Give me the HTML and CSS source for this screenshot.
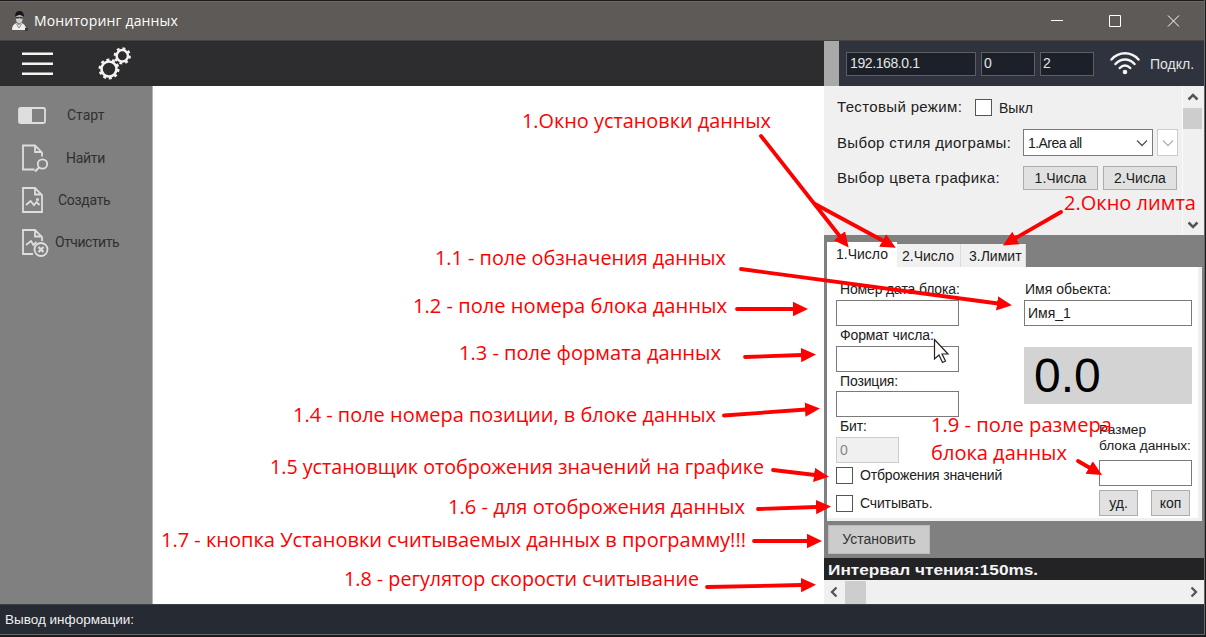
FILE: index.html
```html
<!DOCTYPE html>
<html lang="ru">
<head>
<meta charset="utf-8">
<title>Мониторинг данных</title>
<link rel="stylesheet" href="styles.css">
</head>
<body>
<div class="window">
  <header class="titlebar">
    <svg class="app-icon" width="18" height="22" viewBox="0 0 18 22">
      <path d="M2 20c0-4 1.500-6 4.500-7l2.500 2 2.500-2c3 1 4.500 3 4.500 7z" fill="#eeeeec"/>
      <path d="M6 5h6.500v4.500c0 2-1.300 4-3.200 4S6 11.500 6 9.500z" fill="#cfcfcd"/>
      <path d="M5 6.500C5 3 6.500 1 9.500 1S14 3 14 6.500L9.500 5z" fill="#171717"/>
      <path d="M6 6.800h6.500v1.600H10l-.7-.8-.6.800H6z" fill="#333"/>
      <path d="M6.500 14L9 18l2.500-4" fill="none" stroke="#888" stroke-width="1"/>
      <path d="M15 18h3v3h-3z" fill="#3a3a3a"/>
    </svg>
    <span class="title">Мониторинг данных</span>
    <svg class="window-controls" width="132" height="14" viewBox="0 0 132 14" fill="none" stroke="#fff">
      <path d="M0 6.500h12M58.500 1.500h11v11h-11zM117 1.500l11 11M128 1.500l-11 11"/>
    </svg>
  </header>

  <div class="toolbar">
    <div class="tools">
      <svg class="menu-icon" width="31" height="24" viewBox="0 0 31 24" stroke="#f7f3f0" stroke-width="2.500"><path d="M0 1.800h31M0 11.800h31M0 21.800h31"/></svg>
      <svg class="gears" width="34" height="34" viewBox="0 0 34 34" fill="none" stroke="#f7f3f0">
        <circle cx="11" cy="22" r="7.500" stroke-width="2.600"/>
        <circle cx="11" cy="22" r="9.300" stroke-width="2.400" stroke-dasharray="3 2.843"/>
        <circle cx="24.300" cy="8.800" r="5.700" stroke-width="2.500"/>
        <circle cx="24.300" cy="8.800" r="7.500" stroke-width="2.200" stroke-dasharray="2.800 3.090"/>
      </svg>
    </div>
    <div class="splitter"></div>
    <div class="connection">
      <span class="dark-field ip">192.168.0.1</span>
      <span class="dark-field">0</span>
      <span class="dark-field">2</span>
      <svg class="wifi" width="30" height="23" viewBox="0 0 30 23" fill="none" stroke="#f4f4f4" stroke-width="2.500" stroke-linecap="round">
        <path d="M1.500 7.500C9-.7 21-.7 28.500 7.500M5.500 12C11 6 19 6 24.500 12M9.800 16c3.200-3.300 7.200-3.300 10.400 0"/>
        <circle cx="15" cy="20" r="2.300" fill="#f4f4f4" stroke="none"/>
      </svg>
      <span class="connect-label">Подкл.</span>
    </div>
  </div>

  <main class="content">
    <nav class="sidebar">
      <div class="nav-item">
        <svg width="28" height="17" viewBox="0 0 28 17"><rect x="1" y="1" width="26" height="15" rx="1.500" fill="none" stroke="#dedede" stroke-width="1.800"/><path d="M1 1h13v15H1z" fill="#dedede"/></svg>
        <span class="nav-label start">Старт</span>
      </div>
      <div class="nav-item">
        <svg width="28" height="30" viewBox="0 0 28 30" fill="none" stroke="#dedede" stroke-width="1.800"><path d="M13.500 26.500H2v-24h12L21 9.500v4M14 2.500v6.500h6.500"/><circle cx="21.500" cy="21" r="4.700"/><path d="M18 24.500l-4 4" stroke-width="2.200"/></svg>
        <span class="nav-label find">Найти</span>
      </div>
      <div class="nav-item">
        <svg width="28" height="30" viewBox="0 0 28 30" fill="none" stroke="#dedede" stroke-width="1.800"><path d="M2 3h12L21 10v17H2zM14 3v6.500h6.500M5 20l4.500-4 3.500 4 2.500-3 3 3"/><circle cx="16.500" cy="14.500" r=".7"/></svg>
        <span class="nav-label create">Создать</span>
      </div>
      <div class="nav-item last">
        <svg width="28" height="30" viewBox="0 0 28 30" fill="none" stroke="#dedede" stroke-width="1.800"><path d="M12 27H2V3h12L21 10v4M14 3v6.500h6.500M5 18l5-4 2.500 4 3-3"/><circle cx="20" cy="22.500" r="6.500"/><path d="M17.500 20l5 5M22.500 20l-5 5" stroke-width="2.200"/></svg>
        <span class="nav-label clear">Отчистить</span>
      </div>
    </nav>
    <section class="chart-area"></section>

    <aside class="panel">
      <div class="settings">
        <div class="settings-body">
          <div class="setting-row first">
            <span class="setting-name mode">Тестовый режим:</span>
            <span class="checkbox"></span>
            <span class="off">Выкл</span>
          </div>
          <div class="setting-row">
            <span class="setting-name style">Выбор стиля диограмы:</span>
            <span class="select">1.Area all
              <svg width="12" height="8" viewBox="0 0 12 8" fill="none" stroke="#555" stroke-width="1.300"><path d="M1 1.500l5 5 5-5"/></svg>
            </span>
            <span class="select mini"><svg width="12" height="8" viewBox="0 0 12 8" fill="none" stroke="#b4b4b4" stroke-width="1.300"><path d="M1 1.500l5 5 5-5"/></svg></span>
          </div>
          <div class="setting-row">
            <span class="setting-name color">Выбор цвета графика:</span>
            <span class="button color-button">1.Числа</span>
            <span class="button color-button second">2.Числа</span>
          </div>
        </div>
        <div class="vscroll">
          <svg width="12" height="8" viewBox="0 0 12 8" fill="none" stroke="#555" stroke-width="2.500"><path d="M1.500 6.500L6 2l4.500 4.500"/></svg>
          <div class="vthumb"></div>
          <svg class="down" width="12" height="8" viewBox="0 0 12 8" fill="none" stroke="#555" stroke-width="2.500"><path d="M1.500 1.500L6 6l4.500-4.500"/></svg>
        </div>
      </div>

      <div class="data-block">
        <div class="tabs">
          <span class="tab active">1.Число</span>
          <span class="tab two">2.Число</span>
          <span class="tab three">3.Лимит</span>
        </div>
        <div class="tab-page">
          <div class="left-column">
            <span class="field-name block-no">Номер дата блока:</span>
            <span class="field"></span>
            <span class="field-name format">Формат числа:</span>
            <span class="field"></span>
            <span class="field-name position">Позиция:</span>
            <span class="field"></span>
            <span class="field-name bit">Бит:</span>
            <span class="field disabled">0</span>
            <div class="check-row"><span class="checkbox"></span><span class="check-name show">Отброжения значений</span></div>
            <div class="check-row lower"><span class="checkbox"></span><span class="check-name">Считывать.</span></div>
          </div>
          <div class="right-column">
            <span class="field-name object">Имя обьекта:</span>
            <span class="field name-value">Имя_1</span>
            <div class="display">0.0</div>
            <div class="size-group">
              <div class="size-name">Размер<br>блока данных:</div>
              <span class="field"></span>
              <div class="size-buttons"><span class="button">уд.</span><span class="button">коп</span></div>
            </div>
          </div>
        </div>
        <div class="button apply">Установить</div>
      </div>
      <div class="interval"><span class="wide">Интервал чтения:150ms.</span></div>
      <div class="hscroll">
        <svg width="8" height="12" viewBox="0 0 8 12" fill="none" stroke="#555" stroke-width="2.300"><path d="M6.500 1.500L2 6l4.500 4.500"/></svg>
        <div class="hthumb"></div>
        <svg class="forward" width="8" height="12" viewBox="0 0 8 12" fill="none" stroke="#555" stroke-width="2.300"><path d="M1.500 1.500L6 6l-4.500 4.500"/></svg>
      </div>
    </aside>
  </main>
  <footer class="statusbar">Вывод информации:</footer>
</div>

<svg class="annotations" width="1206" height="637" viewBox="0 0 1206 637">
  <defs>
    <marker id="head" markerUnits="userSpaceOnUse" markerWidth="16" markerHeight="16" refX="1" refY="7.500" orient="auto"><path d="M0 0.300L15 7.500L0 14.700z" fill="#f00"/></marker>
  </defs>
  <g class="arrows">
    <path d="M761 136L840 236.500"/>
    <path d="M815 204L883.500 241"/>
    <path d="M1061 212L1015 238.500"/>
    <path d="M741 269L998 303.500"/>
    <path d="M737 309H794"/>
    <path d="M745 357L802 355"/>
    <path d="M724 415.500L806 409.500"/>
    <path d="M773 470L815 475"/>
    <path d="M758 509L817 507"/>
    <path d="M754 541H808"/>
    <path d="M707 587L802 585"/>
    <path d="M1078 461L1090 468"/>
  </g>
  <g class="notes">
    <text x="522" y="128" textLength="249" lengthAdjust="spacingAndGlyphs">1.Окно установки данных</text>
    <text x="1064" y="210" textLength="132" lengthAdjust="spacingAndGlyphs">2.Окно лимта</text>
    <text x="435" y="265" textLength="291" lengthAdjust="spacingAndGlyphs">1.1 - поле обзначения данных</text>
    <text x="413" y="313" textLength="314" lengthAdjust="spacingAndGlyphs">1.2 - поле номера блока данных</text>
    <text x="459" y="360" textLength="262" lengthAdjust="spacingAndGlyphs">1.3 - поле формата данных</text>
    <text x="293" y="422" textLength="423" lengthAdjust="spacingAndGlyphs">1.4 - поле номера позиции, в блоке данных</text>
    <text x="270" y="474" textLength="494" lengthAdjust="spacingAndGlyphs">1.5 установщик отоброжения значений на графике</text>
    <text x="448" y="514" textLength="297" lengthAdjust="spacingAndGlyphs">1.6 - для отоброжения данных</text>
    <text x="161" y="547" textLength="585" lengthAdjust="spacingAndGlyphs">1.7 - кнопка Установки считываемых данных в программу!!!</text>
    <text x="344" y="586" textLength="355" lengthAdjust="spacingAndGlyphs">1.8 - регулятор скорости считывание</text>
    <text x="931" y="432" textLength="181" lengthAdjust="spacingAndGlyphs">1.9 - поле размера</text>
    <text x="931" y="460" textLength="136" lengthAdjust="spacingAndGlyphs">блока данных</text>
  </g>
  <path d="M934.500 339.500v19.500l4.500-4 3.500 7.500 3-1.500-3.500-7h6z" fill="#fff" stroke="#222" stroke-width="1.200"/>
</svg>
</body>
</html>
```

FILE: styles.css
```css
* { box-sizing: border-box; }
body {
  margin: 0;
  width: 1206px;
  height: 637px;
  overflow: hidden;
  background: #1d1b1d;
  font: 14px/16px "Liberation Sans", sans-serif;
  color: #202020;
}
span, .display, .apply, .interval, .statusbar { white-space: nowrap; }
svg { flex: none; }
.window {
  display: flex;
  flex-direction: column;
  width: 1205px;
  height: 635px;
  padding-top: 1px;
  border-right: 1px solid #686868;
  border-bottom: 1px solid #686868;
}
.titlebar {
  display: flex;
  align-items: center;
  height: 40px;
  padding: 0 21px 0 10px;
  background: #5e5a57;
  border-top: 1px solid #6b6866;
  border-bottom: 1px solid #454344;
}
.title {
  margin-left: 6px;
  color: #fff;
  font: 14px/20px "Open Sans", sans-serif;
  letter-spacing: .15px;
}
.window-controls { margin-left: auto; }

.toolbar { display: flex; height: 45px; }
.tools { display: flex; align-items: center; width: 824px; padding-left: 22px; background: #2d2d30; }
.gears { margin-left: 45px; }
.splitter { width: 15px; background: #a9a9a9; }
.connection {
  display: flex;
  flex: 1;
  align-items: center;
  padding-left: 7px;
  background: #2e333e;
  color: #e4e4e4;
}
.dark-field {
  width: 54px;
  height: 24px;
  margin-right: 5px;
  padding: 2px 2px;
  border: 1px solid #5c5e62;
  background: #1c2029;
  letter-spacing: -.4px;
}
.dark-field.ip { width: 130px; padding-left: 3px; }
.wifi { margin-left: 11px; }
.connect-label { margin-left: 10px; }

.content { display: flex; height: 518px; }
.sidebar {
  width: 153px;
  padding-top: 8px;
  background: #808080;
  border-right: 1px solid #b4b4b4;
}
.nav-item { display: flex; align-items: center; height: 42.500px; padding-left: 19px; }
.nav-item.last { height: 41px; }
.nav-item svg { width: 28px; margin-left: 2px; }
.nav-item:first-child svg { margin-left: -1px; }
.nav-label { color: #303030; font: 14px/18px Roboto, sans-serif; letter-spacing: -.3px; }
.start { margin-left: 21px; letter-spacing: 0; }
.find { margin-left: 17px; }
.create { margin-left: 9px; }
.clear { margin-left: 6px; letter-spacing: -.5px; }
.chart-area { width: 671px; background: #fff; }
.panel { display: flex; flex-direction: column; width: 380px; background: #808080; }

.settings { display: flex; height: 149px; background: #f0f0f0; }
.settings-body { width: 358px; padding: 4px 0 0 13px; }
.setting-row { display: flex; align-items: center; height: 35px; }
.setting-name { width: 186px; font-size: 15px; letter-spacing: .35px; }
.setting-name.mode { width: 138px; margin-top: -2px; }
.checkbox { width: 17px; height: 17px; border: 1.500px solid #555; background: #fff; }
.off { margin-left: 7px; }
.select {
  display: flex;
  align-items: center;
  justify-content: space-between;
  width: 130px;
  height: 27px;
  padding: 0 4px;
  border: 1px solid #7a7a7a;
  background: #fff;
  letter-spacing: -.55px;
}
.select.mini { width: 21px; margin-left: 4px; border-color: #ccc; }
.button {
  display: block;
  border: 1px solid #adadad;
  background: #e1e1e1;
  text-align: center;
}
.color-button { width: 75px; height: 24px; line-height: 23px; }
.color-button.second { width: 74px; margin-left: 5px; }
.vscroll {
  display: flex;
  flex-direction: column;
  align-items: center;
  width: 22px;
  padding: 7px 2px 6px 0;
  border-left: 1px solid #fafafa;
}
.vthumb { width: 19px; height: 21px; margin-top: 7px; background: #cdcdcd; }
.down { margin-top: auto; }

.data-block { height: 323px; padding: 7px 2px 0 3px; }
.tabs { display: flex; align-items: flex-end; height: 25px; }
.tab { width: 64px; height: 23px; padding: 4px 0 0 5px; background: #f0f0f0; border-right: 1px solid #dcdcdc; }
.tab.active { width: 70px; height: 25px; padding: 4px 0 0 9px; background: #fff; border: 0; }
.tab.three { width: 65px; padding-left: 8px; }
.tab-page {
  display: flex;
  height: 254px;
  padding: 13px 6px 0 9px;
  background: #fff;
  border-right: 4px solid #f0f0f0;
  border-bottom: 3px solid #f0f0f0;
}
.left-column { display: flex; flex-direction: column; flex: none; width: 188px; letter-spacing: -.15px; }
.right-column { display: flex; flex-direction: column; width: 168px; flex: none; }
.field-name { height: 20px; padding-left: 4px; line-height: 18px; }
.field { display: block; width: 123px; height: 26px; padding: 4px 3px; border: 1px solid #7a7a7a; background: #fff; }
.field.disabled { width: 63px; border-color: #ccc; background: #f0f0f0; color: #858585; }
.object { padding-left: 1px; }
.name-value { width: 168px; }
.display {
  height: 57px;
  margin-top: 21px;
  padding-left: 10px;
  background: #d3d3d3;
  color: #000;
  font-size: 48px;
  line-height: 58px;
}
.format, .position, .bit { height: 19.500px; }
.check-row { display: flex; align-items: center; height: 17px; margin-top: 4px; }
.check-row.lower { margin-top: 11px; }
.check-name { margin-left: 7px; }
.size-group { width: 93px; margin: 18px 0 0 75px; }
.size-name { height: 38px; white-space: nowrap; font-size: 13.700px; }
.size-group .field { width: 93px; }
.size-buttons { display: flex; justify-content: space-between; margin-top: 4px; padding-right: 2px; }
.size-buttons .button { width: 39px; height: 26px; line-height: 25px; }
.apply { width: 102px; height: 29px; margin: 4px 0 0 1px; background: #ccc; line-height: 27px; border-color: #bbb; color: #333; }
.interval { height: 22px; padding: 4px 4px; background: #232326; color: #f4f4f4; font-weight: bold; font-size: 15px; }
.wide { display: inline-block; transform: scaleX(1.148); transform-origin: left; }
.hscroll { display: flex; align-items: center; height: 24px; padding: 0 6px; background: #f0f0f0; }
.hthumb { width: 21px; height: 23px; margin-left: 7px; background: #cdcdcd; }
.forward { margin-left: auto; }

.statusbar {
  height: 30px;
  padding: 7px 5px;
  background: #262a33;
  border-top: 1px solid #3a3e45;
  color: #eee;
  font: 13.500px/16px "Liberation Sans", sans-serif;
}
.annotations { position: absolute; top: 0; left: 0; pointer-events: none; }
.arrows { fill: none; stroke: #f00; stroke-width: 3.800; stroke-linecap: round; }
.arrows path { marker-end: url(#head); }
.notes { fill: #f00; font: 20.500px "Open Sans", sans-serif; }
```
